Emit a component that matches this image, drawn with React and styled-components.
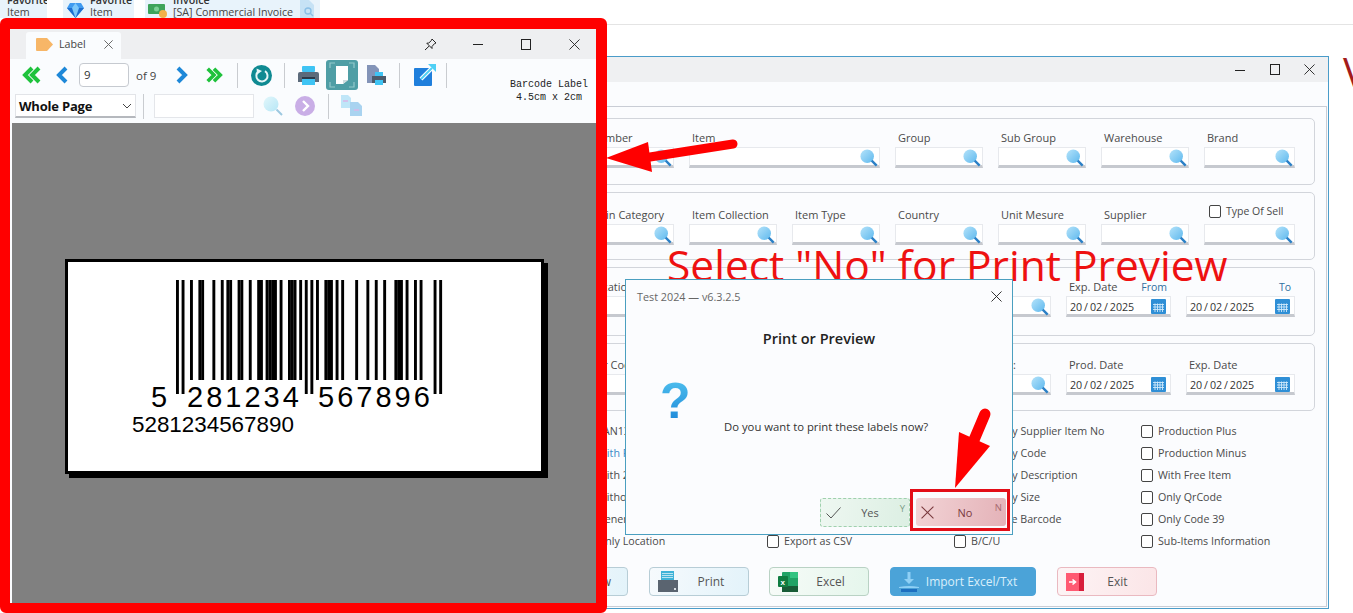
import styled, { createGlobalStyle } from 'styled-components';

const GlobalStyle = createGlobalStyle`
    html, body {
        margin: 0;
        padding: 0;
        background: #fff;
        overflow: hidden;
    }
    body {
        font-family: "Open Sans", "Noto Sans", sans-serif;
        color: #444;
    }
`;

const Page = styled.div`
    position: relative;
    width: 1353px;
    height: 613px;
    overflow: hidden;
`;

/* top strip */
const TopBar = styled.div`
    display: flex;
    height: 25px;
    border-bottom: 1px solid #e4e4e4;
    box-sizing: border-box;
`;

const Tile = styled.div`
    display: flex;
    align-items: flex-end;
    gap: ${(p) => p.$gap || 6}px;
    width: ${(p) => p.$width}px;
    height: 18px;
    margin-left: ${(p) => p.$ml || 0}px;
    padding-left: ${(p) => p.$pl || 3}px;
    box-sizing: border-box;
    background: #e8f3fb;
    overflow: hidden;
`;

const TileText = styled.div`
    font-size: 10.7px;
    line-height: 12px;
    color: #444;
    white-space: nowrap;
    b {
        display: block;
        color: #333;
        font-weight: 600;
    }
`;

/* background window */
const BackWindow = styled.div`
    position: absolute;
    left: 500px;
    top: 56px;
    width: 829px;
    height: 553px;
    box-sizing: border-box;
    border: 1px solid #4a9cc9;
    background: #fbfcfe;
    display: flex;
    flex-direction: column;
`;

const BackTitle = styled.div`
    height: 25px;
    flex: none;
    background: #eff0f2;
    display: flex;
    justify-content: flex-end;
    align-items: center;
    padding-right: 1px;
`;

const WinControl = styled.div`
    width: ${(p) => p.$size || 35}px;
    display: flex;
    justify-content: center;
    align-items: center;
    svg {
        display: block;
    }
`;

const Panel = styled.div`
    flex: 1;
    margin: 24px 1px 1px 0;
    border: 1px solid #c9cdd5;
    border-left: 0;
    padding: 11px 11px 0 0;
`;

const Groups = styled.div`
    display: flex;
    flex-direction: column;
    gap: 7px;
`;

const Group = styled.div`
    height: ${(p) => p.$height || 68}px;
    box-sizing: border-box;
    margin-left: 40px;
    border: 1px solid #d2d5db;
    border-radius: 5px;
    display: flex;
    justify-content: flex-end;
    align-items: flex-end;
    gap: 15px;
    padding: 0 19px ${(p) => p.$pb}px 0;
`;

const Field = styled.div`
    display: flex;
    flex-direction: column;
    width: ${(p) => p.$width || 88}px;
`;

const FieldLabel = styled.div`
    display: flex;
    justify-content: space-between;
    align-items: center;
    height: 14px;
    margin-bottom: 2px;
    padding: 0 3px;
    font-size: 11px;
    line-height: 14px;
    color: #4a4a4a;
    white-space: nowrap;
`;

const RangeWord = styled.span`
    color: #2f6f9f;
    font-size: 10.5px;
    margin-left: auto;
    padding-right: ${(p) => p.$pad || 0}px;
`;

const InputBox = styled.div`
    height: 21px;
    box-sizing: border-box;
    background: #fff;
    border: 1px solid #e7e9ed;
    border-bottom: 3px solid #c6c9cf;
    display: flex;
    align-items: center;
    justify-content: space-between;
    padding: 2px ${(p) => p.$padRight || 1}px 0 3px;
`;

const DateText = styled.span`
    font-size: 10.7px;
    word-spacing: -0.9px;
    color: #333;
`;

const BoxLabel = styled.label`
    display: flex;
    align-items: center;
    gap: 5px;
    height: 14px;
    margin-bottom: 6px;
    margin-top: -4px;
    padding-left: 5px;
    font-size: 10.5px;
    color: #4a4a4a;
    white-space: nowrap;
`;

const CheckGrid = styled.div`
    display: grid;
    grid-template-columns: repeat(4, 187px);
    padding-left: 79px;
    margin-top: 9px;
`;

const CheckColumn = styled.div`
    display: flex;
    flex-direction: column;
    justify-content: flex-end;
`;

const CheckRow = styled.div`
    display: flex;
    align-items: center;
    gap: 5px;
    height: 22px;
    font-size: 10.7px;
    color: ${(p) => (p.$blue ? '#3a8ac8' : '#4a4a4a')};
    white-space: nowrap;
`;

const Box = styled.span`
    display: block;
    flex: none;
    width: 10px;
    height: 11px;
    background: #fff;
    border: 1px solid #444;
    border-radius: 2px;
`;

const ButtonRow = styled.div`
    display: flex;
    gap: 20px;
    margin-top: 15px;
    padding-left: 27px;
`;

const tones = {
    blue: 'border: 1px solid #b7cdd6; background: linear-gradient(100deg, #f6fafd, #e3f3fa); color: #555;',
    green: 'border: 1px solid #b9d2c4; background: linear-gradient(100deg, #f7fbf8, #e5f6ec); color: #555;',
    solid: 'border: 1px solid #4ba3d8; background: #4ba3d8; color: #d9effb;',
    red: 'border: 1px solid #eab9c0; background: linear-gradient(100deg, #fdf4f5, #fbe5e7); color: #555;',
};

const ActionButton = styled.div`
    display: flex;
    align-items: center;
    width: ${(p) => p.$width || 100}px;
    height: 29px;
    box-sizing: border-box;
    margin-left: ${(p) => p.$ml || 0}px;
    padding-left: ${(p) => p.$pl || 8}px;
    border-radius: 4px;
    font-size: 12px;
    ${(p) => tones[p.$tone]}
    span {
        flex: 1;
        text-align: center;
        padding-right: ${(p) => p.$textPad || 0}px;
    }
    svg {
        flex: none;
    }
`;

const Annotation = styled.div`
    position: absolute;
    left: 667px;
    top: 235px;
    font-size: 42.5px;
    line-height: 60px;
    color: #ee1111;
    white-space: nowrap;
`;

const EdgeLetter = styled.div`
    position: absolute;
    left: 1343px;
    top: 44px;
    font-size: 40px;
    line-height: 56px;
    color: #a31b1b;
`;

/* dialog */
const Dialog = styled.div`
    position: absolute;
    left: 625px;
    top: 279px;
    width: 388px;
    height: 256px;
    box-sizing: border-box;
    border: 1px solid #4a9fc0;
    background: #fbfcfe;
    display: flex;
    flex-direction: column;
`;

const DialogHead = styled.div`
    display: flex;
    justify-content: space-between;
    align-items: center;
    height: 32px;
    padding: 0 10px 0 11px;
    font-size: 10.8px;
    color: #666;
`;

const DialogTitle = styled.div`
    margin-top: 17px;
    text-align: center;
    font-size: 14.5px;
    line-height: 20px;
    font-weight: 600;
    color: #222;
`;

const DialogBody = styled.div`
    flex: 1;
    display: flex;
    padding: 29px 0 0 34px;
`;

const Question = styled.div`
    width: 28px;
    font-family: "Liberation Sans", sans-serif;
    font-weight: 700;
    font-size: 50px;
    line-height: 46px;
    height: 46px;
    background: linear-gradient(180deg, #4fc0ee, #1b86d8);
    -webkit-background-clip: text;
    background-clip: text;
    color: transparent;
`;

const Message = styled.div`
    margin: 41px 0 0 36px;
    font-size: 11.3px;
    line-height: 16px;
    color: #333;
    white-space: nowrap;
`;

const DialogFooter = styled.div`
    display: flex;
    justify-content: flex-end;
    align-items: center;
    padding: 0 2px 3px 0;
`;

const ChoiceButton = styled.div`
    position: relative;
    display: flex;
    align-items: center;
    width: 90px;
    height: ${(p) => (p.$no ? 28 : 29)}px;
    margin-top: ${(p) => (p.$no ? 0 : 5)}px;
    box-sizing: border-box;
    padding-left: 5px;
    border-radius: 3px;
    font-size: 11px;
    color: ${(p) => (p.$no ? '#7a3a3e' : '#555')};
    border: ${(p) => (p.$no ? '0' : '1px dashed #9fd0ad')};
    background: ${(p) => (p.$no
        ? 'linear-gradient(100deg, #f2d3d5, #e4b2b8)'
        : 'linear-gradient(100deg, #eef7f1, #dcefe3)')};
    span {
        flex: 1;
        text-align: center;
        padding-right: 10px;
    }
`;

const KeyHint = styled.i`
    position: absolute;
    right: 4px;
    top: 4px;
    font-style: normal;
    font-size: 9.5px;
    line-height: 12px;
    color: ${(p) => (p.$no ? '#a96a70' : '#7d9d88')};
`;

const NoHighlight = styled.div`
    padding: 6px 1px 2px 3px;
    border: 3px solid #e30d17;
`;

/* label window */
const LabelWindow = styled.div`
    position: absolute;
    left: 0;
    top: 18px;
    width: 607px;
    height: 595px;
    box-sizing: border-box;
    border-style: solid;
    border-color: #ff0000;
    border-width: 11px 11px 10px 10px;
    border-radius: 6px;
    background: #fafcfe;
    display: flex;
    flex-direction: column;
    overflow: hidden;
`;

const LabelTitle = styled.div`
    flex: none;
    display: flex;
    justify-content: space-between;
    align-items: flex-end;
    height: 30px;
    padding-left: 16px;
    background: #eeeff1;
`;

const Tab = styled.div`
    display: flex;
    align-items: center;
    width: 95px;
    height: 27px;
    box-sizing: border-box;
    padding: 0 0 3px 10px;
    gap: 6px;
    background: #fafcfe;
    border-radius: 3px 3px 0 0;
    font-size: 10.7px;
    color: #444;
    svg:last-child {
        margin-left: 12px;
    }
`;

const LabelControls = styled.div`
    display: flex;
    align-self: center;
    gap: 4px;
`;

const Toolbar = styled.div`
    flex: none;
    display: flex;
    justify-content: space-between;
    height: 64px;
    box-sizing: border-box;
    padding: 1px 8px 0 0;
`;

const ToolRows = styled.div`
    display: flex;
    flex-direction: column;
    gap: 3px;
`;

const ToolRow = styled.div`
    display: flex;
    align-items: center;
    height: ${(p) => p.$height}px;
`;

const Tool = styled.div`
    display: flex;
    align-items: center;
    justify-content: center;
    flex: none;
    margin-left: ${(p) => p.$ml || 0}px;
    width: ${(p) => p.$width}px;
    svg {
        display: block;
    }
`;

const ToolSep = styled.div`
    flex: none;
    width: 1px;
    height: 25px;
    margin-left: ${(p) => p.$ml}px;
    background: #c9ccd0;
`;

const PageInput = styled.div`
    flex: none;
    width: 50px;
    height: 24px;
    box-sizing: border-box;
    margin-left: 10px;
    padding-left: 4px;
    border: 1px solid #c6cad0;
    border-radius: 4px;
    background: #fff;
    font-size: 11.5px;
    line-height: 22px;
    color: #333;
`;

const OfText = styled.div`
    margin-left: 7px;
    width: 22px;
    flex: none;
    font-size: 11.5px;
    color: #444;
    white-space: nowrap;
`;

const ActiveTool = styled(Tool)`
    height: 30px;
    border-radius: 3px;
    background: #4f9ea5;
`;

const ZoomSelect = styled.div`
    display: flex;
    align-items: center;
    justify-content: space-between;
    flex: none;
    width: 121px;
    height: 24px;
    box-sizing: border-box;
    margin-left: 5px;
    padding: 0 3px 0 3px;
    background: #fff;
    border: 1px solid #e2e4e8;
    border-bottom: 2px solid #b5b8bd;
    font-size: 13px;
    letter-spacing: -0.2px;
    font-weight: 700;
    color: #111;
`;

const SearchBox = styled.div`
    flex: none;
    width: 100px;
    height: 24px;
    box-sizing: border-box;
    margin-left: 10px;
    background: #fff;
    border: 1px solid #e4e6ea;
`;

const Caption = styled.div`
    align-self: flex-end;
    padding-bottom: 19px;
    font-family: "Liberation Mono", monospace;
    font-size: 10px;
    line-height: 13px;
    color: #222;
    text-align: center;
`;

const GreyArea = styled.div`
    flex: 1;
    margin-left: 2px;
    background: #808080;
    display: flex;
    justify-content: center;
    padding-top: 136px;
`;

const LabelSheet = styled.div`
    width: 479px;
    height: 215px;
    box-sizing: border-box;
    border: 3px solid #000;
    background: #fff;
    box-shadow: 4px 4px 0 #000;
    svg {
        display: block;
    }
`;

const OverlayArt = styled.svg`
    position: absolute;
    left: 0;
    top: 0;
    pointer-events: none;
`;

/* icons */
const Close = ({ size = 12, color = '#222', width = 1 }) => (
    <svg width={size} height={size} viewBox="0 0 12 12">
        <path d="M0.5 0.5 L11.5 11.5 M11.5 0.5 L0.5 11.5" stroke={color} strokeWidth={width} fill="none" />
    </svg>
);

const Minimize = () => (
    <svg width="10" height="10" viewBox="0 0 10 10"><path d="M0 5.5H10" stroke="#222" /></svg>
);

const Maximize = () => (
    <svg width="10" height="11" viewBox="0 0 10 11"><rect x="0.5" y="0.5" width="9" height="10" fill="none" stroke="#222" /></svg>
);

const Pin = () => (
    <svg width="13" height="13" viewBox="0 0 13 13" fill="none" stroke="#222">
        <path d="M8 1 L12 5 L10.5 5.6 L8 8.5 L8 10.5 L2.8 5.2 L4.8 5 L7.4 2.5 Z M5 8.2 L1 12" />
    </svg>
);

const PaleMagnifier = () => (
    <svg width="20" height="20" viewBox="0 0 20 20">
        <defs>
            <linearGradient id="paleLens" x1="0" y1="0" x2="1" y2="1">
                <stop offset="0" stopColor="#e3f7fb" />
                <stop offset="1" stopColor="#b5e6f6" />
            </linearGradient>
        </defs>
        <circle cx="8" cy="8" r="7.5" fill="url(#paleLens)" />
        <path d="M13.5 13.5 L19 19" stroke="#9cc8e0" strokeWidth="2" />
    </svg>
);

const SmallSearch = () => (
    <svg width="18" height="18" viewBox="0 0 20 20">
        <defs>
            <linearGradient id="lens" x1="0" y1="0" x2="1" y2="1">
                <stop offset="0" stopColor="#b5e3fa" />
                <stop offset="1" stopColor="#5fb9ee" />
            </linearGradient>
        </defs>
        <circle cx="8" cy="8" r="7.5" fill="url(#lens)" />
        <path d="M13 13 L18.5 18.5" stroke="#2a7fc6" strokeWidth="2.6" />
    </svg>
);

const Calendar = () => (
    <svg width="15" height="15" viewBox="0 0 15 15">
        <rect width="15" height="15" rx="1" fill="#2f8fd6" />
        <path d="M2 5.5H13M2 8H13M2 10.5H13M4 4.5V13M6.5 4.5V13M9 4.5V13M11.5 4.5V13" stroke="#cfe9fb" strokeWidth="0.9" />
    </svg>
);

const Chevron = ({ dir = 'right', color, double }) => (
    <svg width={double ? 20 : 14} height="18" viewBox={double ? '0 0 20 18' : '0 0 14 18'} fill="none" stroke={color} strokeWidth="4">
        <g transform={dir === 'left' ? `translate(${double ? 20 : 14} 0) scale(-1 1)` : undefined}>
            <path d="M3 2 L10 9 L3 16" />
            {double && <path d="M10 2 L17 9 L10 16" />}
        </g>
    </svg>
);

const Refresh = () => (
    <svg width="21" height="21" viewBox="0 0 21 21">
        <circle cx="10.5" cy="10.5" r="10.5" fill="#0f8a92" />
        <path d="M7.6 6.4 A5.6 5.6 0 1 0 14 6.2" fill="none" stroke="#e6f6f7" strokeWidth="2" />
        <path d="M5.6 3.4 L11 6 L6 9.4 Z" fill="#e6f6f7" />
    </svg>
);

const Printer = () => (
    <svg width="21" height="21" viewBox="0 0 21 21">
        <rect x="4" y="1" width="13" height="6" rx="1" fill="#3fc4f4" />
        <path d="M0 9 Q0 7 2 7 H19 Q21 7 21 9 V17 H0 Z" fill="#5c6b7b" />
        <rect x="4" y="13" width="13" height="7" fill="#3fc4f4" />
        <rect x="4" y="12" width="13" height="2" fill="#2d3a48" />
    </svg>
);

const FitPage = () => (
    <svg width="26" height="26" viewBox="0 0 26 26" fill="none">
        <path d="M1 6V1H6M20 1H25V6M1 20V25H6M20 25H25V20" stroke="#93c9cc" strokeWidth="1.2" />
        <path d="M7 4H19V18L14 22H7Z" fill="#fff" />
        <path d="M19 18L14 22V18Z" fill="#cfdcde" />
    </svg>
);

const PrintDoc = () => (
    <svg width="21" height="22" viewBox="0 0 21 22">
        <path d="M1 1H9L13 5V19H1Z" fill="#8394b8" />
        <rect x="9" y="8" width="8" height="4" fill="#3fc4f4" />
        <path d="M6 12H20V19H6Z" fill="#4d5b6b" />
        <rect x="9" y="16" width="8" height="5" fill="#3fc4f4" />
    </svg>
);

const ExportBox = () => (
    <svg width="22" height="22" viewBox="0 0 22 22">
        <rect x="0" y="4" width="18" height="18" rx="1" fill="#1f7fdc" />
        <path d="M7 15 L19 3" stroke="#fff" strokeWidth="4" />
        <path d="M7 15 L18 4" stroke="#4fd0f5" strokeWidth="2" />
        <path d="M14 0 H22 V8 Z" fill="#4fd0f5" />
    </svg>
);

const NextRound = () => (
    <svg width="20" height="20" viewBox="0 0 20 20">
        <circle cx="10" cy="10" r="10" fill="#c9aee6" />
        <path d="M8 5 L13 10 L8 15" fill="none" stroke="#fff" strokeWidth="2.4" />
    </svg>
);

const CopyDocs = () => (
    <svg width="22" height="22" viewBox="0 0 22 22">
        <path d="M0 0H7L10 3V13H0Z" fill="#bfe6f8" />
        <path d="M9 7H17L21 11V21H9Z" fill="#a9d3f0" />
        <path d="M2 6H7M13 15H18" stroke="#d9b7e8" strokeWidth="1.5" />
    </svg>
);

const TagIcon = () => (
    <svg width="17" height="13" viewBox="0 0 17 13">
        <path d="M1 0H11L17 6.5L11 13H1Q0 13 0 12V1Q0 0 1 0Z" fill="#f7b667" />
    </svg>
);

const Gem = () => (
    <svg width="17" height="16" viewBox="0 0 17 16">
        <path d="M3 1H14L17 6L8.5 16L0 6Z" fill="#3f9bf0" />
        <path d="M0 6H17L8.5 16Z" fill="#1d6fd0" />
        <path d="M5 6L8.5 16L12 6L8.5 1Z" fill="#7cc8fa" />
    </svg>
);

const Money = () => (
    <svg width="19" height="14" viewBox="0 0 19 14">
        <rect y="0" width="17" height="10" rx="1" fill="#3da35a" />
        <circle cx="8.5" cy="5" r="2.5" fill="#7bd095" />
        <circle cx="15" cy="10" r="4" fill="#f2b04a" />
    </svg>
);

const DocSearch = () => (
    <svg width="17" height="18" viewBox="0 0 17 18">
        <path d="M1 0H10L15 5V18H1Z" fill="#c6e2f5" />
        <circle cx="9" cy="11" r="3" fill="none" stroke="#8cc0e6" strokeWidth="1.4" />
        <path d="M11 13L14 16" stroke="#8cc0e6" strokeWidth="1.4" />
    </svg>
);

const PrintButtonIcon = () => (
    <svg width="20" height="22" viewBox="0 0 20 22">
        <rect x="3" y="0" width="13" height="9" fill="#3fb3d8" />
        <path d="M4 2.5H15M4 4.5H15M4 6.5H15" stroke="#d8f0f8" strokeWidth="0.8" />
        <path d="M0 9H20V21H0Z" fill="#5a6470" />
        <rect x="16" y="17" width="2" height="2" fill="#d8dde2" />
    </svg>
);

const ExcelIcon = () => (
    <svg width="20" height="20" viewBox="0 0 20 20">
        <rect x="4" y="0" width="16" height="20" rx="1" fill="#21a366" />
        <rect x="12" y="0" width="8" height="6" fill="#33c481" />
        <rect x="4" y="14" width="16" height="6" fill="#185c37" />
        <rect x="0" y="4" width="10" height="11" rx="1" fill="#107c41" />
        <text x="2.5" y="12.5" fontSize="8" fontWeight="700" fill="#fff" fontFamily="Liberation Sans, sans-serif">x</text>
    </svg>
);

const ImportIcon = () => (
    <svg width="20" height="24" viewBox="0 0 20 24">
        <path d="M8.5 2H11.5V9H15L10 14L5 9H8.5Z" fill="#8fd0f5" />
        <path d="M0 17 Q10 15 20 17 V18 H0Z" fill="#8fd0f5" />
        <path d="M2 19H18V22H2Z" fill="#1d6fc0" />
    </svg>
);

const ExitIcon = () => (
    <svg width="18" height="18" viewBox="0 0 18 18">
        <rect width="14" height="18" fill="#ff5a72" />
        <rect x="13" width="5" height="18" fill="#d81e3c" />
        <path d="M3 9H9M6.5 6.5L9.5 9L6.5 11.5" stroke="#fff" strokeWidth="1.6" fill="none" />
    </svg>
);

const Check = () => (
    <svg width="15" height="12" viewBox="0 0 15 12">
        <path d="M0.5 6.5 L5 11 L14.5 0.5" fill="none" stroke="#555" />
    </svg>
);

/* EAN-13 drawn from its digits, so the bars stay correct */
const L_CODES = ['0001101', '0011001', '0010011', '0111101', '0100011', '0110001', '0101111', '0111011', '0110111', '0001011'];
const invert = (code) => code.split('').map((c) => (c === '0' ? '1' : '0')).join('');
const G_CODES = L_CODES.map((c) => invert(c).split('').reverse().join(''));
const R_CODES = L_CODES.map(invert);

const buildModules = () => {
    const left = '281234';
    const right = '567896';
    const parity = 'LGGLLG';
    let bits = '101';
    left.split('').forEach((d, i) => {
        bits += parity[i] === 'L' ? L_CODES[+d] : G_CODES[+d];
    });
    bits += '01010';
    right.split('').forEach((d) => {
        bits += R_CODES[+d];
    });
    return `${bits}101`;
};

const GUARDS = [0, 1, 2, 45, 46, 47, 48, 49, 92, 93, 94];

const Barcode = () => (
    <svg width="473" height="209" viewBox="68 262 473 209">
        {buildModules().split('').map((bit, m) => (bit === '1' ? (
            <rect
                key={m}
                x={176 + m * 2.8}
                y="280"
                width="2.9"
                height={GUARDS.includes(m) ? 114 : 100}
                fill="#000"
            />
        ) : null))}
        <g fontFamily="Liberation Sans, sans-serif" fontSize="29" fill="#000">
            <text x="151" y="407">5</text>
            <text x="187" y="407" letterSpacing="3">281234</text>
            <text x="318" y="407" letterSpacing="3">567896</text>
        </g>
        <text x="132" y="432" fontFamily="Liberation Sans, sans-serif" fontSize="22.4" fill="#000">5281234567890</text>
    </svg>
);

const SearchField = ({ label, width }) => (
    <Field $width={width}>
        <FieldLabel>{label}</FieldLabel>
        <InputBox>
            <span />
            <SmallSearch />
        </InputBox>
    </Field>
);

const DateField = ({ label, width, range, rangePad }) => (
    <Field $width={width}>
        <FieldLabel>
            {label}
            {range && <RangeWord $pad={rangePad}>{range}</RangeWord>}
        </FieldLabel>
        <InputBox $padRight={4}>
            <DateText>20 / 02 / 2025</DateText>
            <Calendar />
        </InputBox>
    </Field>
);

const checkColumns = [
    [
        { text: 'EAN13' },
        { text: 'With Price', blue: true },
        { text: 'With 2 Labels' },
        { text: 'Without Name' },
        { text: 'Generate' },
        { text: 'Only Location' },
    ],
    [{ text: 'Export as CSV' }],
    [
        { text: 'Group By Supplier Item No' },
        { text: 'Group By Code' },
        { text: 'Group By Description' },
        { text: 'Group By Size' },
        { text: 'Generate Barcode' },
        { text: 'B/C/U' },
    ],
    [
        { text: 'Production Plus' },
        { text: 'Production Minus' },
        { text: 'With Free Item' },
        { text: 'Only QrCode' },
        { text: 'Only Code 39' },
        { text: 'Sub-Items Information' },
    ],
];

const App = () => (
    <Page>
        <GlobalStyle />
        <TopBar>
            <Tile $width={47} $pl={7}>
                <TileText><b>Favorite</b>Item</TileText>
            </Tile>
            <Tile $width={71} $ml={16} $pl={4}>
                <Gem />
                <TileText><b>Favorite</b>Item</TileText>
            </Tile>
            <Tile $width={175} $ml={11}>
                <Money />
                <TileText><b>Invoice</b>[SA] Commercial Invoice</TileText>
                <DocSearch />
            </Tile>
        </TopBar>

        <BackWindow>
            <BackTitle>
                <WinControl><Minimize /></WinControl>
                <WinControl><Maximize /></WinControl>
                <WinControl><Close size={11} /></WinControl>
            </BackTitle>
            <Panel>
                <Groups>
                    <Group $height={67} $pb={16}>
                        <SearchField label="Number" width={87} />
                        <SearchField label="Item" width={191} />
                        <SearchField label="Group" />
                        <SearchField label="Sub Group" />
                        <SearchField label="Warehouse" />
                        <SearchField label="Brand" width={91} />
                    </Group>
                    <Group $pb={14}>
                        <SearchField label="Main Category" width={87} />
                        <SearchField label="Item Collection" />
                        <SearchField label="Item Type" />
                        <SearchField label="Country" />
                        <SearchField label="Unit Mesure" />
                        <SearchField label="Supplier" />
                        <Field $width={91}>
                            <BoxLabel><Box />Type Of Sell</BoxLabel>
                            <InputBox><span /><SmallSearch /></InputBox>
                        </Field>
                    </Group>
                    <Group $height={69} $pb={18}>
                        <SearchField label="Location" width={87} />
                        <SearchField label="Name" width={259} />
                        <SearchField label="" />
                        <DateField label="Exp. Date" range="From" rangePad={1} width={105} />
                        <DateField label="" range="To" rangePad={1} width={109} />
                    </Group>
                    <Group $pb={15}>
                        <SearchField label="Bar Code" width={87} />
                        <SearchField label="Name" width={259} />
                        <SearchField label="Batch No:" />
                        <DateField label="Prod. Date" width={105} />
                        <DateField label="Exp. Date" width={109} />
                    </Group>
                </Groups>
                <CheckGrid>
                    {checkColumns.map((column) => (
                        <CheckColumn key={column[0].text}>
                            {column.map((item) => (
                                <CheckRow key={item.text} $blue={item.blue}>
                                    <Box />
                                    {item.text}
                                </CheckRow>
                            ))}
                        </CheckColumn>
                    ))}
                </CheckGrid>
                <ButtonRow>
                    <ActionButton $tone="blue" $pl={22}><span>Preview</span></ActionButton>
                    <ActionButton $tone="blue" $ml={1} $textPad={4}><PrintButtonIcon /><span>Print</span></ActionButton>
                    <ActionButton $tone="green" $textPad={5}><ExcelIcon /><span>Excel</span></ActionButton>
                    <ActionButton $tone="solid" $width={146} $ml={1} $textPad={11}><ImportIcon /><span>Import Excel/Txt</span></ActionButton>
                    <ActionButton $tone="red" $ml={1} $textPad={5}><ExitIcon /><span>Exit</span></ActionButton>
                </ButtonRow>
            </Panel>
        </BackWindow>

        <EdgeLetter>V</EdgeLetter>
        <Annotation>Select "No" for Print Preview</Annotation>

        <Dialog>
            <DialogHead>
                Test 2024 — v6.3.2.5
                <Close size={11} />
            </DialogHead>
            <DialogTitle>Print or Preview</DialogTitle>
            <DialogBody>
                <Question>?</Question>
                <Message>Do you want to print these labels now?</Message>
            </DialogBody>
            <DialogFooter>
                <ChoiceButton>
                    <Check />
                    <span>Yes</span>
                    <KeyHint>Y</KeyHint>
                </ChoiceButton>
                <NoHighlight>
                    <ChoiceButton $no>
                        <Close size={13} color="#7a3a3e" />
                        <span>No</span>
                        <KeyHint $no>N</KeyHint>
                    </ChoiceButton>
                </NoHighlight>
            </DialogFooter>
        </Dialog>

        <LabelWindow>
            <LabelTitle>
                <Tab>
                    <TagIcon />
                    Label
                    <Close size={9} color="#666" width={1.3} />
                </Tab>
                <LabelControls>
                    <WinControl $size={44}><Pin /></WinControl>
                    <WinControl $size={44}><Minimize /></WinControl>
                    <WinControl $size={44}><Maximize /></WinControl>
                    <WinControl $size={44}><Close size={11} /></WinControl>
                </LabelControls>
            </LabelTitle>
            <Toolbar>
                <ToolRows>
                    <ToolRow $height={30}>
                        <Tool $ml={12} $width={20}><Chevron dir="left" double color="#1fc23c" /></Tool>
                        <Tool $ml={13} $width={14}><Chevron dir="left" color="#1e88d8" /></Tool>
                        <PageInput>9</PageInput>
                        <OfText>of 9</OfText>
                        <Tool $ml={17} $width={14}><Chevron color="#1e88d8" /></Tool>
                        <Tool $ml={16} $width={18}><Chevron double color="#1fc23c" /></Tool>
                        <ToolSep $ml={14} />
                        <Tool $ml={13} $width={21}><Refresh /></Tool>
                        <ToolSep $ml={12} />
                        <Tool $ml={13} $width={21}><Printer /></Tool>
                        <ActiveTool $ml={7} $width={32}><FitPage /></ActiveTool>
                        <Tool $ml={8} $width={21}><PrintDoc /></Tool>
                        <ToolSep $ml={12} />
                        <Tool $ml={14} $width={22}><ExportBox /></Tool>
                        <ToolSep $ml={10} />
                    </ToolRow>
                    <ToolRow $height={26}>
                        <ZoomSelect>
                            Whole Page
                            <svg width="10" height="6" viewBox="0 0 10 6"><path d="M1 1L5 5L9 1" fill="none" stroke="#444" /></svg>
                        </ZoomSelect>
                        <ToolSep $ml={7} />
                        <SearchBox />
                        <Tool $ml={9} $width={20}><PaleMagnifier /></Tool>
                        <Tool $ml={12} $width={20}><NextRound /></Tool>
                        <ToolSep $ml={13} />
                        <Tool $ml={12} $width={22}><CopyDocs /></Tool>
                    </ToolRow>
                </ToolRows>
                <Caption>Barcode Label<br />4.5cm x 2cm</Caption>
            </Toolbar>
            <GreyArea>
                <LabelSheet><Barcode /></LabelSheet>
            </GreyArea>
        </LabelWindow>

        <OverlayArt width="1353" height="613" viewBox="0 0 1353 613">
            <path d="M733 144 L650 157" stroke="#ff0000" strokeWidth="9" strokeLinecap="round" />
            <path d="M606 158 L648 142 L652 172 Z" fill="#ff0000" />
            <path d="M985 414 L974 440" stroke="#ff0000" strokeWidth="11" strokeLinecap="round" />
            <path d="M955 488 L959 432 L990 446 Z" fill="#ff0000" />
        </OverlayArt>
    </Page>
);

export default App;
